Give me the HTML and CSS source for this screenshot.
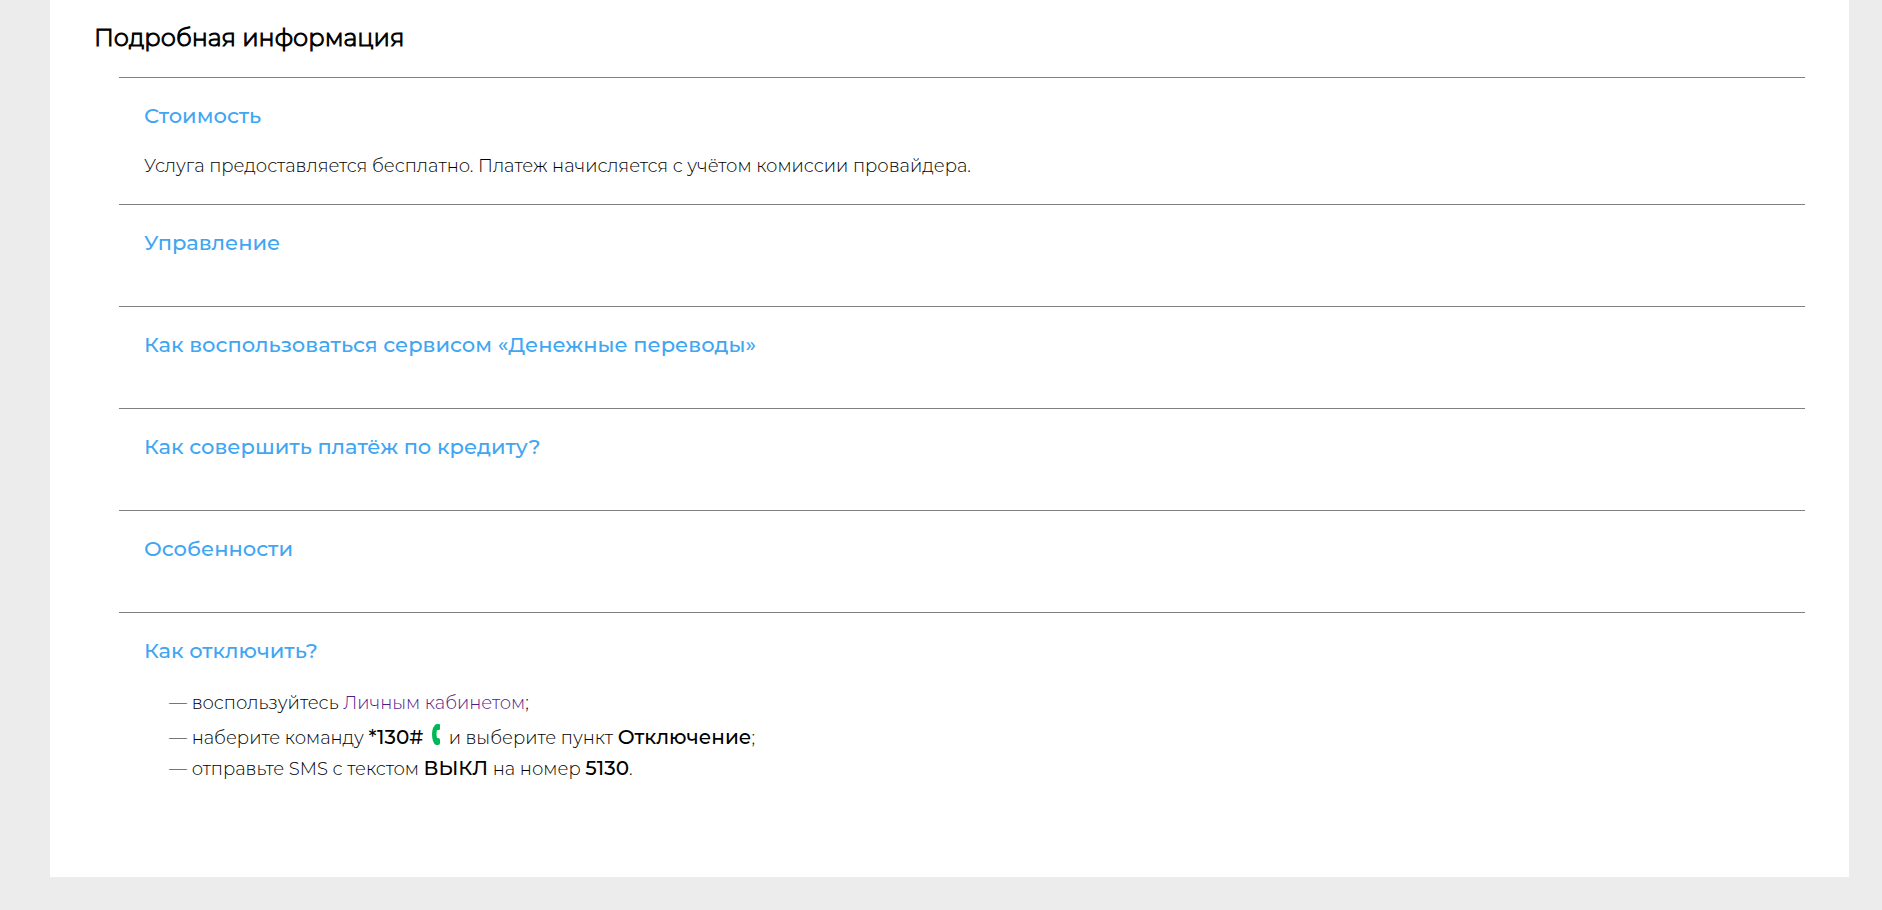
FILE: index.html
```html
<!DOCTYPE html>
<html lang="ru">
<head>
<meta charset="utf-8">
<title>Денежные переводы</title>
<link rel="stylesheet" href="styles.css">
</head>
<body>
<main class="page">
  <h1 class="title">Подробная информация</h1>
  <div class="sections">
    <section class="section">
      <h2 class="heading">Стоимость</h2>
      <p class="text">Услуга предоставляется бесплатно. Платеж начисляется с учётом комиссии провайдера.</p>
    </section>
    <section class="section section-empty"><h2 class="heading">Управление</h2></section>
    <section class="section section-empty"><h2 class="heading">Как воспользоваться сервисом «Денежные переводы»</h2></section>
    <section class="section section-empty"><h2 class="heading">Как совершить платёж по кредиту?</h2></section>
    <section class="section section-empty"><h2 class="heading">Особенности</h2></section>
    <section class="section">
      <h2 class="heading">Как отключить?</h2>
      <ul class="list">
        <li>— воспользуйтесь <a class="link" href="#">Личным кабинетом</a>;</li>
        <li class="call">— наберите команду <b>*130#</b> <svg class="phone" viewBox="0 0 8 21" aria-hidden="true"><path d="M3 1Q4 0 5 0H7Q8 0 8 1V5Q8 6 7 6H5Q4 10 5 14H6Q8 14 8 16V19Q8 21 6 21H4Q2 20 1 17Q-1 10 1 4Z"/></svg> и выберите пункт <b>Отключение</b>;</li>
        <li>— отправьте SMS с текстом <b>ВЫКЛ</b> на номер <b>5130</b>.</li>
      </ul>
    </section>
  </div>
</main>
</body>
</html>
```
FILE: styles.css
```css
* { box-sizing: border-box; }
html { background: #ececec; }
body {
  margin: 0;
  padding: 0 33px 32px 50px;
  color: #000;
  font: 300 18px/26px Montserrat, Inter, "Open Sans", sans-serif;
}
.page {
  padding: 20px 44px 68px;
  background: #fff;
}
.title {
  margin: 0 0 21px;
  font-size: 24px;
  line-height: 36px;
  font-weight: 300;
  -webkit-text-stroke: 1px currentColor;
}
.sections { margin-left: 25px; }
.section {
  padding: 25px 25px;
  border-top: 1px solid #808080;
}
.section-empty { padding-bottom: 50px; }
.heading {
  margin: 0;
  color: #3ea6f2;
  font-size: 21px;
  line-height: 26px;
  font-weight: 500;
}
.text { margin: 24px 0 0; }
.list {
  margin: 24px 0 0;
  padding: 0 0 0 25px;
  list-style: none;
  line-height: 30px;
}
.list b { font-size: 20px; font-weight: 500; }
.call { padding-top: 4px; }
.link { color: #551a8b; text-decoration: none; }
.phone {
  width: 8px;
  height: 21px;
  margin: 0 4px;
  vertical-align: -1px;
  fill: #00b956;
}
```
